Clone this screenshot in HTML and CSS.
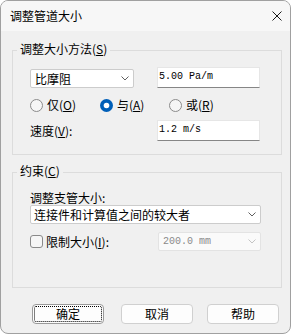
FILE: index.html
```html
<!DOCTYPE html>
<html lang="zh-CN">
<head>
<meta charset="utf-8">
<title>调整管道大小</title>
<link rel="stylesheet" href="styles.css">
</head>
<body>
<div class="window">
  <div class="titlebar">
    <span class="title">调整管道大小</span>
    <svg class="close" width="10" height="10" viewBox="0 0 10 10"><path d="M0.5 0.5 L9.5 9.5 M9.5 0.5 L0.5 9.5" stroke="#1a1a1a" stroke-width="1" fill="none"/></svg>
  </div>

  <fieldset class="group group-method">
    <legend>调整大小方法(<u>S</u>)</legend>
    <div class="grid-row row-first">
      <div class="combo">
        <span>比摩阻</span>
        <svg class="chev" width="8" height="5" viewBox="0 0 8 5"><path d="M0.5 0.5 L4 4 L7.5 0.5" fill="none" stroke="#5f5f5f" stroke-width="1"/></svg>
      </div>
      <div class="textbox">5.00 Pa/m</div>
    </div>
    <div class="radios">
      <label class="radio radio-o">
        <svg width="13" height="13" viewBox="0 0 13 13"><circle cx="6.5" cy="6.5" r="6" fill="#f6f6f6" stroke="#8a8a8a"/></svg>
        <span>仅(<u>O</u>)</span>
      </label>
      <label class="radio radio-a">
        <svg width="13" height="13" viewBox="0 0 13 13"><circle cx="6.5" cy="6.5" r="6.5" fill="#005fb8"/><circle cx="6.5" cy="6.5" r="2.8" fill="#fff"/></svg>
        <span>与(<u>A</u>)</span>
      </label>
      <label class="radio">
        <svg width="13" height="13" viewBox="0 0 13 13"><circle cx="6.5" cy="6.5" r="6" fill="#f6f6f6" stroke="#8a8a8a"/></svg>
        <span>或(<u>R</u>)</span>
      </label>
    </div>
    <div class="grid-row row-speed">
      <span class="lbl">速度(<u>V</u>):</span>
      <div class="textbox">1.2 m/s</div>
    </div>
  </fieldset>

  <fieldset class="group group-limit">
    <legend>约束(<u>C</u>)</legend>
    <div class="sublabel">调整支管大小:</div>
    <div class="combo combo-wide">
      <span>连接件和计算值之间的较大者</span>
      <svg class="chev" width="8" height="5" viewBox="0 0 8 5"><path d="M0.5 0.5 L4 4 L7.5 0.5" fill="none" stroke="#5f5f5f" stroke-width="1"/></svg>
    </div>
    <div class="check-row">
      <label class="check">
        <svg width="13" height="13" viewBox="0 0 13 13"><rect x="0.5" y="0.5" width="12" height="12" rx="2.5" fill="#f6f6f6" stroke="#8a8a8a"/></svg>
        <span>限制大小(<u>I</u>):</span>
      </label>
      <div class="combo combo-disabled">
        <span class="mono">200.0 mm</span>
        <svg class="chev" width="8" height="5" viewBox="0 0 8 5"><path d="M0.5 0.5 L4 4 L7.5 0.5" fill="none" stroke="#c4c4c4" stroke-width="1"/></svg>
      </div>
    </div>
  </fieldset>

  <div class="buttons">
    <button class="btn btn-default">确定</button>
    <button class="btn btn-cancel">取消</button>
    <button class="btn btn-help">帮助</button>
  </div>
</div>
</body>
</html>
```

FILE: styles.css
```css
html, body {
  margin: 0;
  background: #ffffff;
}
body {
  font-family: "Noto Sans CJK SC", "Noto Sans", sans-serif;
  font-size: 12px;
  color: #000;
}
u { text-decoration: underline; text-underline-offset: 1px; }

.window {
  width: 291px;
  height: 334px;
  box-sizing: border-box;
  border: 1px solid #a0a0a0;
  border-radius: 8px;
  background: #f0f0f0;
  overflow: hidden;
  display: flex;
  flex-direction: column;
}

.titlebar {
  flex: none;
  height: 30px;
  display: flex;
  align-items: center;
  justify-content: space-between;
  padding: 0 8px 0 9px;
  background: #f7f7f7;
}
.title { line-height: 16px; }
.close { display: block; }

.group {
  margin: 10px 0 0 11px;
  width: 270px;
  box-sizing: border-box;
  border: 1px solid #dcdcdc;
  padding: 8px 0 13px 17px;
  min-width: 0;
}
.group legend {
  margin-left: -13px;
  padding: 0 3px 2px;
  line-height: 16px;
}
.group-limit {
  margin-top: 8px;
  padding: 10px 0 36px 17px;
}

.grid-row {
  display: grid;
  grid-template-columns: 104px 103px;
  column-gap: 23px;
  align-items: end;
}
.row-speed {
  margin-top: 7px;
  align-items: center;
}
.lbl { line-height: 16px; }

.combo {
  box-sizing: border-box;
  height: 19px;
  background: #fff;
  border: 1px solid #cccccc;
  border-radius: 2px;
  display: flex;
  align-items: center;
  justify-content: space-between;
  padding: 0 4px 0 4px;
  line-height: 16px;
}
.chev { display: block; flex: none; }

.textbox {
  box-sizing: border-box;
  height: 21px;
  background: #fff;
  border: 1px solid #e6e6e6;
  border-bottom-color: #868686;
  padding: 0 0 1px 1px;
  font-family: "Liberation Mono", monospace;
  font-size: 10px;
  line-height: 18px;
}

.radios {
  margin-top: 9px;
  height: 16px;
  display: flex;
  align-items: center;
}
.radio, .check {
  display: flex;
  align-items: center;
  gap: 4px;
  line-height: 16px;
}
.radio svg, .check svg { display: block; flex: none; }
.radio-o { width: 70px; }
.radio-a { width: 69px; }
.check { gap: 3px; }

.sublabel { line-height: 14px; }
.combo-wide { width: 231px; padding-left: 3px; }

.check-row {
  margin-top: 8px;
  height: 19px;
  display: grid;
  grid-template-columns: 128px 103px;
  align-items: center;
}
.combo-disabled {
  background: #fafafa;
  border-color: #e3e3e3;
  color: #8a8a8a;
}
.mono {
  font-family: "Liberation Mono", monospace;
  font-size: 10px;
}

.buttons {
  margin-top: 16px;
  padding-left: 31px;
  display: flex;
}
.btn {
  width: 72px;
  height: 20px;
  box-sizing: border-box;
  background: #fdfdfd;
  border: 1px solid #d0d0d0;
  border-radius: 4px;
  font-family: "Noto Sans CJK SC", sans-serif;
  font-size: 12px;
  line-height: 16px;
  color: #000;
  padding: 0;
}
.btn-default {
  border-color: #9a9a9a;
  outline: 1px dotted #000;
  outline-offset: -3px;
}
.btn-cancel { margin-left: 17px; }
.btn-help { margin-left: 14px; }
```
